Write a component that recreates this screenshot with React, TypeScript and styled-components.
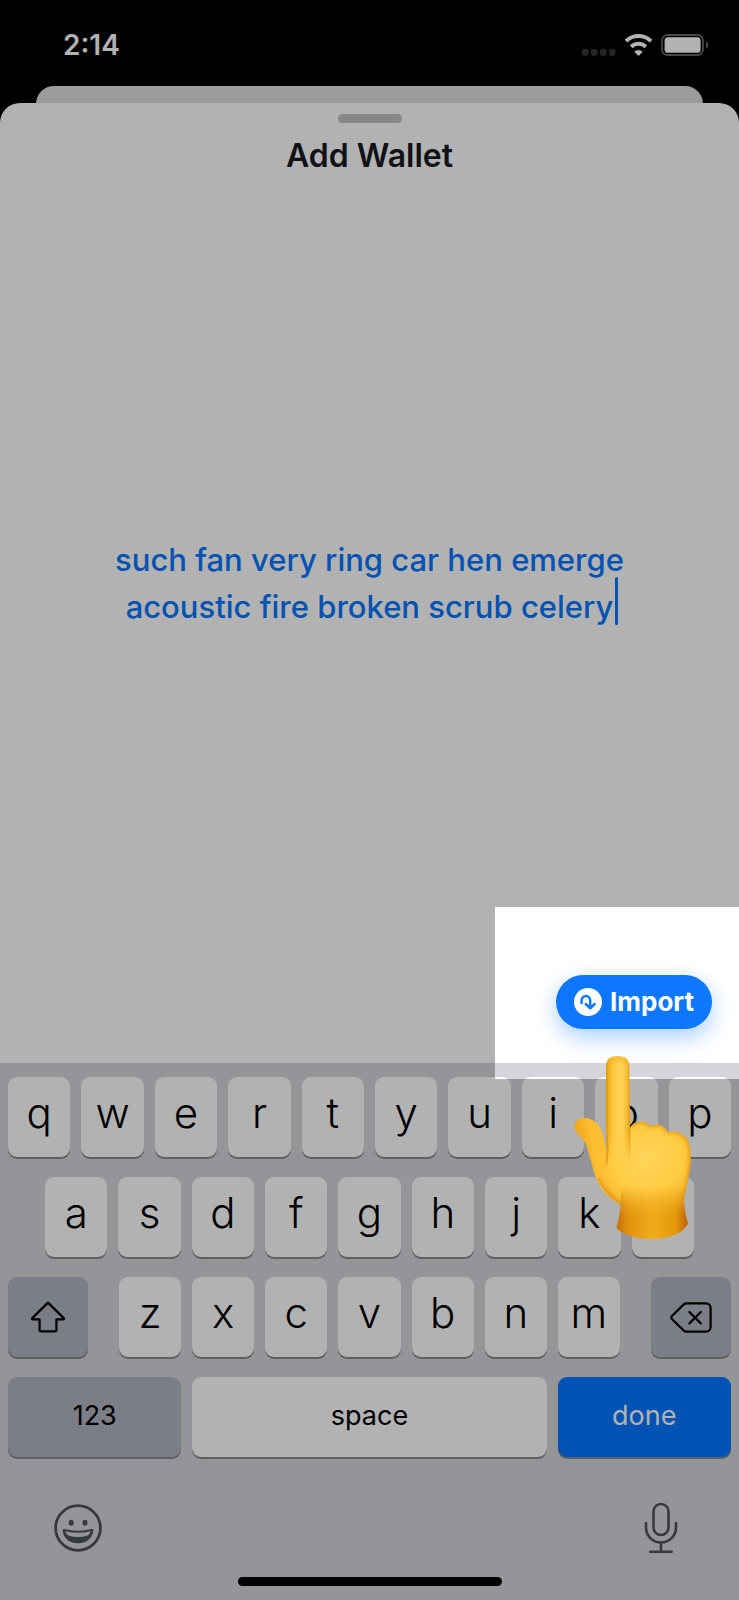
import React from "react";
import styled, { createGlobalStyle, css } from "styled-components";

const GlobalStyle = createGlobalStyle`
  *, *::before, *::after { box-sizing: border-box; }
  body { margin: 0; background: #000; }
  button, textarea { font-family: inherit; }
`;

const Screen = styled.div`
  position: relative;
  display: flex;
  flex-direction: column;
  min-height: 100vh;
  overflow: hidden;
  background: #000;
  font-family: Inter, "Liberation Sans", sans-serif;
`;

const StatusBar = styled.header`
  display: flex;
  align-items: center;
  justify-content: space-between;
  height: 86px;
  padding: 3px 30px 0 63px;
  color: #fff;
`;

const Clock = styled.time`
  font-size: 28px;
  line-height: 32px;
  font-weight: 600;
`;

const StatusIcons = styled.div`
  display: flex;
  align-items: center;
  gap: 8px;

  svg {
    display: block;
  }
`;

const BackCard = styled.div`
  height: 34px;
  margin: 0 36px -17px;
  border-radius: 18px 18px 0 0;
  background: #e0e0e0;
`;

const Sheet = styled.main`
  position: relative;
  flex: 1;
  display: flex;
  flex-direction: column;
  border-radius: 20px 20px 0 0;
  background: #fff;
`;

const SheetHeader = styled.div`
  display: flex;
  flex-direction: column;
  align-items: center;
  gap: 14px;
  height: 88px;
  padding-top: 11px;
`;

const Grabber = styled.div`
  width: 64px;
  height: 9px;
  border-radius: 5px;
  background: #c0c1c8;
`;

const Title = styled.h1`
  margin: 0;
  color: #171a21;
  font-size: 32px;
  line-height: 38px;
  font-weight: 600;
`;

const PhraseArea = styled.div`
  flex: 1;
  display: flex;
  align-items: center;
`;

const PhraseField = styled.div`
  position: relative;
  width: 100%;
`;

const PhraseInput = styled.textarea`
  display: block;
  width: 100%;
  height: 94px;
  padding: 0 64px;
  border: 0;
  outline: 0;
  resize: none;
  overflow: hidden;
  background: transparent;
  color: #0077ff;
  font-size: 31px;
  line-height: 47px;
  font-weight: 500;
  text-align: center;
`;

const Caret = styled.span`
  position: absolute;
  bottom: 5px;
  left: calc(50% + 245px);
  width: 3px;
  height: 48px;
  border-radius: 2px;
  background: #0077ff;
`;

const ActionArea = styled.div`
  position: relative;
  display: flex;
  justify-content: flex-end;
  align-items: flex-start;
  height: 88px;
  padding-right: 27px;
`;

const ImportButton = styled.button`
  display: flex;
  align-items: center;
  justify-content: center;
  gap: 8px;
  width: 156px;
  height: 54px;
  padding: 0;
  border: 0;
  border-radius: 27px;
  background: #0d77ff;
  box-shadow: 0 8px 22px rgba(13, 119, 255, 0.36);
  color: #fff;
  font-size: 26px;
  line-height: 32px;
  font-weight: 700;
`;

/* Everything outside the spotlight is dimmed by its spread shadow. */
const Spotlight = styled.div`
  position: absolute;
  z-index: 2;
  right: 0;
  bottom: -16px;
  width: 244px;
  height: 172px;
  box-shadow: 0 0 0 4000px rgba(0, 0, 0, 0.3);
  pointer-events: none;
`;

const Pointer = styled.svg`
  position: absolute;
  z-index: 3;
  top: 80px;
  right: 46px;
  width: 119px;
  height: 185px;
  pointer-events: none;
`;

const Keyboard = styled.section`
  display: flex;
  flex-direction: column;
  gap: 20px;
  padding: 14px 8px;
  background: #d5d6db;
`;

const KeyRow = styled.div<{ $inset?: number }>`
  display: flex;
  justify-content: space-between;
  gap: 11px;
  padding: 0 ${(p) => p.$inset ?? 0}px;
`;

const LetterGroup = styled.div`
  flex: 1;
  display: flex;
  gap: 11px;
  padding: 0 20px;
`;

const BottomRow = styled.div`
  display: grid;
  grid-template-columns: 49fr 100fr 49fr;
  gap: 11px;
`;

const Key = styled.button<{ $tone?: "light" | "dark" | "blue" }>`
  flex: 1 1 0;
  min-width: 0;
  display: flex;
  align-items: center;
  justify-content: center;
  height: 80px;
  padding: 0 0 8px;
  border: 0;
  border-radius: 9px;
  background: #fff;
  box-shadow: 0 2px 0 #898a8d;
  color: #000;
  font-size: 42px;
  line-height: 52px;
  font-weight: 300;
  ${(p) => p.$tone === "dark" && css`background: #b1b5c1;`}
  ${(p) => p.$tone === "blue" && css`background: #0077ff; color: #fff;`}
`;

const WordKey = styled(Key)`
  padding: 0 0 2px;
  font-size: 27px;
  line-height: 34px;
  font-weight: 400;
`;

const IconKey = styled(Key)`
  flex: 0 0 80px;
  padding: 0;
`;

const KeyboardFooter = styled.div`
  display: flex;
  align-items: center;
  justify-content: space-between;
  height: 58px;
  margin-top: 22px;
  padding: 0 53px 0 46px;
`;

const PlainButton = styled.button`
  display: flex;
  padding: 0;
  border: 0;
  background: none;
  color: #4f5358;
`;

const HomeIndicator = styled.div`
  align-self: center;
  width: 264px;
  height: 9px;
  border-radius: 5px;
  background: #000;
`;

const SignalIcon = () => (
  <svg width="34" height="22" viewBox="0 0 34 22" fill="#353535" aria-hidden="true">
    {[0, 9, 18, 27].map((x) => (
      <rect key={x} x={x} y="15" width="6.5" height="6.8" rx="2" />
    ))}
  </svg>
);

const WifiIcon = () => (
  <svg width="29" height="22" viewBox="0 0 29 22" fill="none" stroke="#fff" aria-hidden="true">
    <path d="M2 7.1a18 18 0 0 1 25 0" strokeWidth="4" />
    <path d="M7.2 12.7a10.5 10.5 0 0 1 14.6 0" strokeWidth="4" />
    <path d="M14.5 22l-4.3-4.2a6.2 6.2 0 0 1 8.6 0z" fill="#fff" stroke="none" />
  </svg>
);

const BatteryIcon = () => (
  <svg width="48" height="22" viewBox="0 0 48 22" aria-hidden="true">
    <rect x="1" y="1" width="41" height="20" rx="5.5" fill="none" stroke="#666" strokeWidth="1.8" />
    <rect x="3.6" y="3.2" width="36" height="15.6" rx="3.4" fill="#fff" />
    <path d="M45 7.2c3 1.3 3 6.3 0 7.6z" fill="#666" />
  </svg>
);

const ImportIcon = () => (
  <svg width="28" height="28" viewBox="0 0 28 28" aria-hidden="true">
    <circle cx="14" cy="14" r="14" fill="#fff" />
    <path
      d="M7.6 15V12.4a4.3 4.3 0 0 1 8.6 0V19.8M11.8 16l4.400 4.300L20.600 16"
      fill="none"
      stroke="#0d77ff"
      strokeWidth="2.5"
      strokeLinecap="round"
      strokeLinejoin="round"
    />
  </svg>
);

const ShiftIcon = () => (
  <svg width="36" height="32" viewBox="0 0 36 32" fill="none" stroke="#000" strokeWidth="2.2" strokeLinejoin="round" aria-hidden="true">
    <path d="M18 1.6 34 17.4Q34.4 18.4 33.2 18.4H26.4V29Q26.4 30.4 25 30.4H11Q9.6 30.4 9.6 29V18.4H2.8Q1.6 18.4 2 17.4Z" />
  </svg>
);

const DeleteIcon = () => (
  <svg width="42" height="31" viewBox="0 0 42 31" fill="none" stroke="#000" strokeWidth="2.2" strokeLinecap="round" strokeLinejoin="round" aria-hidden="true">
    <path d="M16.5 1.4H36a4.6 4.6 0 0 1 4.6 4.6V25a4.6 4.6 0 0 1-4.6 4.6H16.5Q14.9 29.6 13.8 28.6L1.9 17Q.7 15.5 1.9 14L13.8 2.4Q14.9 1.4 16.5 1.4Z" />
    <path d="M19.4 10l11.4 11.4M30.8 10L19.4 21.4" />
  </svg>
);

const EmojiIcon = () => (
  <svg width="48" height="48" viewBox="0 0 48 48" aria-hidden="true">
    <circle cx="24" cy="24" r="22.4" fill="none" stroke="currentColor" strokeWidth="2.8" />
    <ellipse cx="17.2" cy="18.8" rx="2.5" ry="3" fill="currentColor" />
    <ellipse cx="31" cy="18.8" rx="2.5" ry="3" fill="currentColor" />
    <path d="M10.4 25q13.6 3.6 27.2 0 1.8-.2 1.8 1.4C38.4 34.6 32 39.2 24 39.2S9.6 34.6 8.7 26.4Q8.600 24.8 10.4 25Z" fill="currentColor" />
    <path d="M11.2 27.2q12.8 3 25.6 0-1 2.600-3.200 4.400Q24 34.600 14.400 31.600 12.200 29.800 11.200 27.200Z" fill="#d5d6db" />
  </svg>
);

const MicIcon = () => (
  <svg width="34" height="52" viewBox="0 0 34 52" fill="none" stroke="currentColor" strokeWidth="2.6" strokeLinecap="round" aria-hidden="true">
    <rect x="9.5" y="2" width="15" height="31" rx="7.5" />
    <path d="M2 21v4.5a15 15 0 0 0 30 0V21M17 41v8.5M6.3 49.7h21.4" />
  </svg>
);

const PointingHand = () => (
  <Pointer viewBox="72 42 357 555" role="img" aria-label="Tap here">
    <defs>
      <linearGradient id="finger" x1="0" x2="1">
        <stop offset="0" stopColor="#dc940f" />
        <stop offset=".13" stopColor="#f3b324" />
        <stop offset=".32" stopColor="#ffcb48" />
        <stop offset=".68" stopColor="#ffd257" />
        <stop offset=".88" stopColor="#f6b82d" />
        <stop offset="1" stopColor="#de9711" />
      </linearGradient>
      <linearGradient id="thumb" x1="0" y1=".6" x2="1" y2=".4">
        <stop offset="0" stopColor="#e99b10" />
        <stop offset=".3" stopColor="#fcbd2e" />
        <stop offset=".7" stopColor="#ffc63c" />
        <stop offset="1" stopColor="#eaa019" />
      </linearGradient>
      <radialGradient id="palm" gradientUnits="userSpaceOnUse" cx="290" cy="350" r="210">
        <stop offset="0" stopColor="#ffd45a" />
        <stop offset=".5" stopColor="#ffcb42" />
        <stop offset=".8" stopColor="#f8b62a" />
        <stop offset="1" stopColor="#e89c14" />
      </radialGradient>
      <linearGradient id="wrist" x1="0" x2="1">
        <stop offset="0" stopColor="#c46e0c" />
        <stop offset=".16" stopColor="#e1930d" />
        <stop offset=".5" stopColor="#f0ab1a" />
        <stop offset=".82" stopColor="#e39a0c" />
        <stop offset="1" stopColor="#bd6208" />
      </linearGradient>
      <linearGradient id="blend" x1="0" y1="0" x2="0" y2="1">
        <stop offset="0" stopColor="#fff" />
        <stop offset=".7" stopColor="#fff" />
        <stop offset="1" stopColor="#000" />
      </linearGradient>
      <mask id="fingerMask" maskUnits="userSpaceOnUse" x="160" y="40" width="90" height="330">
        <rect x="160" y="40" width="90" height="330" fill="url(#blend)" />
      </mask>
      <linearGradient id="palmBlend" gradientUnits="userSpaceOnUse" x1="0" y1="435" x2="0" y2="525">
        <stop offset="0" stopColor="#fff" />
        <stop offset="1" stopColor="#000" />
      </linearGradient>
      <mask id="palmMask" maskUnits="userSpaceOnUse" x="60" y="200" width="380" height="400">
        <rect x="60" y="200" width="380" height="400" fill="url(#palmBlend)" />
      </mask>
      <clipPath id="fist">
        <path d="M168 260H240C252 238 287 235 300 256C318 246 344 251 353 273C380 268 407 279 416 304C426 338 424 374 413 421Q406 452 402 487L212 492C178 472 152 438 142 412C160 400 172 380 170 355Z" />
      </clipPath>
      <filter id="soft" x="-20%" y="-20%" width="140%" height="140%">
        <feGaussianBlur stdDeviation="6" />
      </filter>
    </defs>
    <path d="M73 257C72 239 87 230 107 231C132 233 153 255 160 285C166 309 169 338 171 365L240 350L290 480L212 490C174 472 148 441 136 404C126 373 117 338 110 314C104 293 76 279 73 257Z" fill="url(#thumb)" />
    <path d="M213 425H407L401 468Q402 506 414 548C397 580 352 594 304 594C257 594 215 580 199 560Q209 529 212 488Z" fill="url(#wrist)" />
    <g mask="url(#palmMask)">
      <path d="M168 260H240C252 238 287 235 300 256C318 246 344 251 353 273C380 268 407 279 416 304C426 338 424 374 413 421Q406 452 401 470Q401 500 407 530H205Q212 512 212 492C178 472 152 438 142 412C160 400 172 380 170 355Z" fill="url(#palm)" />
    </g>
    <g clipPath="url(#fist)" fill="none" filter="url(#soft)">
      <path d="M242 256C252 235 288 232 300 253C318 242 344 248 354 269C382 263 410 276 420 304C430 338 427 374 416 421L404 490" stroke="#dc900f" strokeWidth="13" />
      <path d="M130 395Q153 456 214 494" stroke="#dd8d13" strokeWidth="15" />
    </g>
    <path d="M168 365V76Q169 45 203 45Q237 45 238 76L241 300V365Z" fill="url(#finger)" mask="url(#fingerMask)" />
    <path d="M171 280Q176 330 170 372" fill="none" stroke="#d78a10" strokeWidth="4" opacity=".65" />
    <path d="M180 66Q203 35 227 66" fill="none" stroke="#efa91d" strokeWidth="6" filter="url(#soft)" />
  </Pointer>
);

const Letter = ({ char }: { char: string }) => <Key type="button">{char}</Key>;

const letters = (row: string) => row.split("").map((char) => <Letter key={char} char={char} />);

export default function App() {
  return (
    <Screen>
      <GlobalStyle />
      <StatusBar>
        <Clock>2:14</Clock>
        <StatusIcons>
          <SignalIcon />
          <WifiIcon />
          <BatteryIcon />
        </StatusIcons>
      </StatusBar>
      <BackCard />
      <Sheet>
        <SheetHeader>
          <Grabber />
          <Title>Add Wallet</Title>
        </SheetHeader>
        <PhraseArea>
          <PhraseField>
            <PhraseInput
              aria-label="Secret phrase"
              spellCheck={false}
              defaultValue={"such fan very ring car hen emerge\nacoustic fire broken scrub celery"}
            />
            <Caret />
          </PhraseField>
        </PhraseArea>
        <ActionArea>
          <ImportButton type="button">
            <ImportIcon />
            Import
          </ImportButton>
          <Spotlight />
          <PointingHand />
        </ActionArea>
      </Sheet>
      <Keyboard aria-label="Keyboard">
        <KeyRow>{letters("qwertyuiop")}</KeyRow>
        <KeyRow $inset={37}>{letters("asdfghjkl")}</KeyRow>
        <KeyRow>
          <IconKey type="button" $tone="dark" aria-label="Shift">
            <ShiftIcon />
          </IconKey>
          <LetterGroup>{letters("zxcvbnm")}</LetterGroup>
          <IconKey type="button" $tone="dark" aria-label="Delete">
            <DeleteIcon />
          </IconKey>
        </KeyRow>
        <BottomRow>
          <WordKey type="button" $tone="dark">123</WordKey>
          <WordKey type="button">space</WordKey>
          <WordKey type="button" $tone="blue">done</WordKey>
        </BottomRow>
        <KeyboardFooter>
          <PlainButton type="button" aria-label="Emoji">
            <EmojiIcon />
          </PlainButton>
          <PlainButton type="button" aria-label="Dictate">
            <MicIcon />
          </PlainButton>
        </KeyboardFooter>
        <HomeIndicator />
      </Keyboard>
    </Screen>
  );
}
